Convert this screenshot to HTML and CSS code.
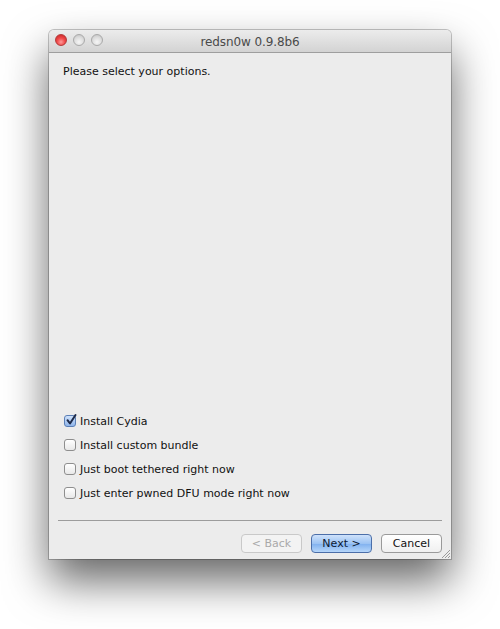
FILE: index.html
```html
<!DOCTYPE html>
<html>
<head>
<meta charset="utf-8">
<link rel="stylesheet" href="styles.css">
</head>
<body>
<div class="window">
  <div class="titlebar">
    <div class="lights">
      <span class="light red"></span>
      <span class="light gray"></span>
      <span class="light gray"></span>
    </div>
    <div class="title">redsn0w 0.9.8b6</div>
  </div>
  <div class="content">
    <p class="prompt">Please select your options.</p>
    <div class="options">
      <label class="opt"><span class="cb checked"><svg width="12" height="12" viewBox="0 0 12 12"><path d="M2.5 6.2 L5 9.5 L10.5 1" fill="none" stroke="#1d2a4a" stroke-width="2" stroke-linecap="round" stroke-linejoin="round"/></svg></span>Install Cydia</label>
      <label class="opt"><span class="cb"></span>Install custom bundle</label>
      <label class="opt"><span class="cb"></span>Just boot tethered right now</label>
      <label class="opt"><span class="cb"></span>Just enter pwned DFU mode right now</label>
    </div>
    <div class="sep"></div>
    <div class="buttons">
      <span class="btn disabled">&lt; Back</span>
      <span class="btn primary">Next &gt;</span>
      <span class="btn">Cancel</span>
    </div>
    <svg class="grip" width="11" height="11" viewBox="0 0 11 11"><path d="M10 2 L2 10 M10 5 L5 10 M10 8 L8 10" stroke="#9a9a9a" stroke-width="1"/></svg>
  </div>
</div>
</body>
</html>
```
FILE: styles.css
```css
html, body {
  margin: 0;
  padding: 0;
  background: #ffffff;
}
body {
  min-height: 629px;
  box-sizing: border-box;
  padding: 30px 49px 0 49px;
  font-family: "DejaVu Sans", "Liberation Sans", sans-serif;
}
.window {
  width: 402px;
  height: 529px;
  display: flex;
  flex-direction: column;
  border-radius: 5px 5px 0 0;
  box-shadow: 0 22px 44px rgba(0,0,0,0.6), 0 0 0 1px rgba(0,0,0,0.22);
  background: #ececec;
  overflow: hidden;
}
.titlebar {
  height: 22px;
  position: relative;
  background: linear-gradient(#ececec, #d3d3d3);
  border-bottom: 1px solid #9e9e9e;
  display: flex;
  align-items: center;
  justify-content: center;
}
.lights {
  position: absolute;
  left: 6px;
  top: 4px;
  display: flex;
  gap: 6px;
}
.light {
  width: 12px;
  height: 12px;
  border-radius: 50%;
  box-sizing: border-box;
}
.light.red {
  background: radial-gradient(circle at 50% 70%, #ff9a9a 0%, #f04a4a 45%, #c42020 100%);
  border: 1px solid #b33a3a;
}
.light.gray {
  background: radial-gradient(circle at 50% 70%, #f6f6f6 0%, #dcdcdc 55%, #bdbdbd 100%);
  border: 1px solid #a9a9a9;
}
.title {
  font-size: 12px;
  color: #4a4a4a;
  letter-spacing: -0.1px;
  margin-top: 1px;
}
.content {
  flex: 1;
  position: relative;
  display: flex;
  flex-direction: column;
  padding: 0 9px 0 9px;
}
.prompt {
  margin: 12px 0 0 5px;
  font-size: 11px;
  color: #111;
  flex: 1;
}
.options {
  display: flex;
  flex-direction: column;
  gap: 10px;
  padding-left: 6px;
}
.opt {
  display: flex;
  align-items: center;
  font-size: 11px;
  color: #111;
  height: 14px;
}
.cb {
  width: 12px;
  height: 12px;
  box-sizing: border-box;
  border: 1px solid #8e8e8e;
  border-radius: 3px;
  background: linear-gradient(#ffffff, #e8e8e8);
  margin-right: 4px;
  display: flex;
  align-items: center;
  justify-content: center;
}
.cb.checked {
  border-color: #5b7fb6;
  background: linear-gradient(#cfe2fb, #8fb5ea);
}
.cb svg {
  overflow: visible;
  margin-top: -3px;
  margin-left: 1px;
}
.sep {
  height: 1px;
  background: #9c9c9c;
  margin-top: 20px;
}
.buttons {
  display: flex;
  justify-content: flex-end;
  gap: 9px;
  margin-top: 13px;
  margin-bottom: 6px;
}
.btn {
  width: 61px;
  height: 19px;
  box-sizing: border-box;
  border: 1px solid #9a9a9a;
  border-radius: 4px;
  background: linear-gradient(#ffffff, #f0f0f0);
  font-size: 11px;
  color: #111;
  display: flex;
  align-items: center;
  justify-content: center;
}
.btn.disabled {
  color: #a9a9a9;
  border-color: #c9c9c9;
  background: #f3f3f3;
}
.btn.primary {
  border-color: #4c6fa9;
  background: linear-gradient(#cfe2fb, #9cc3f3 50%, #7fb0ef 51%, #b6d6fa);
  color: #0c1933;
}
.grip {
  position: absolute;
  right: 0;
  bottom: 0;
}
```
